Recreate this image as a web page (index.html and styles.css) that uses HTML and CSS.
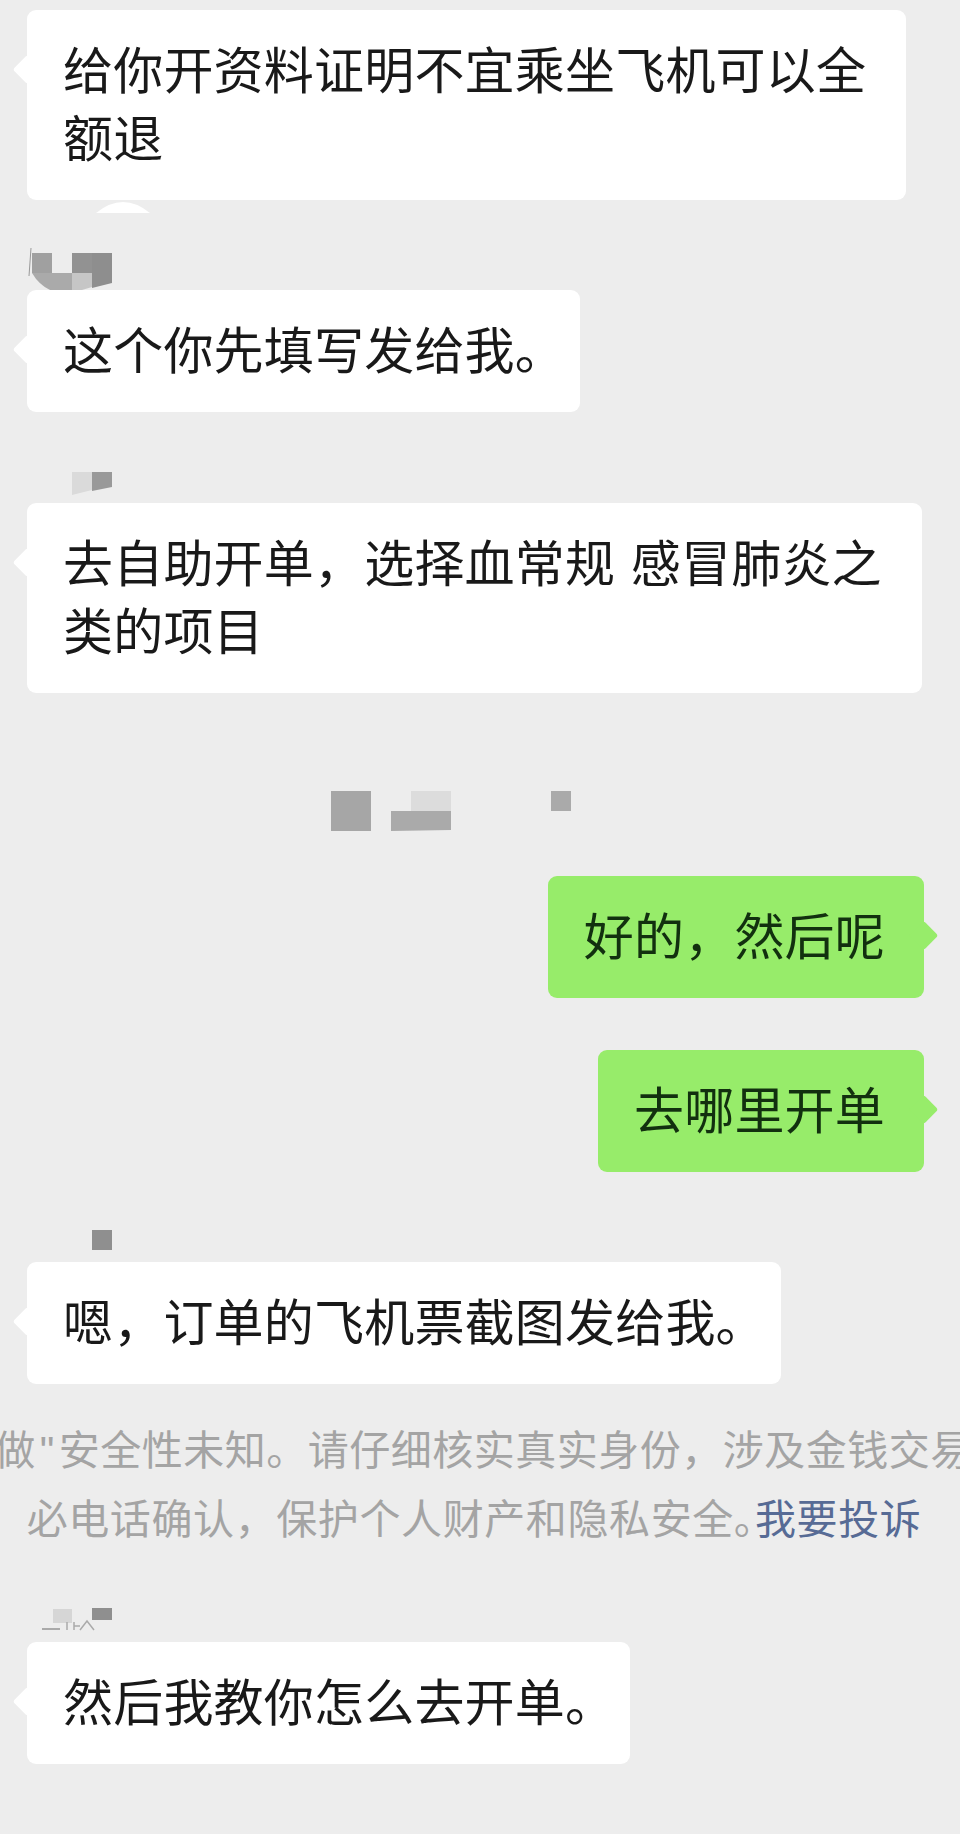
FILE: index.html
```html
<!DOCTYPE html>
<html lang="zh-CN">
<head>
	<meta charset="UTF-8">
	<title>聊天记录</title>
	<link rel="stylesheet" href="styles.css">
</head>
<body>
	<div id="chat">
		<div class="msg left"><div class="bubble">给你开资料证明不宜乘坐飞机可以全<br>额退</div></div>

		<svg class="mask" width="960" height="90">
			<path d="M96 13Q123 -9 150 13Z" fill="#fff"/>
			<path d="M31 48L29 76" stroke="#999" stroke-width="1" fill="none"/>
			<path d="M32 53H52V73H32Z" fill="#a0a0a0"/>
			<path d="M72 53H92V73H72Z" fill="#929292"/>
			<path d="M92 53H112V83L92 88Z" fill="#8e8e8e"/>
			<path d="M32 73H72V93H60Q42 90 32 73Z" fill="#aaa"/>
			<path d="M72 73H92V87L72 93Z" fill="#c6c6c6"/>
		</svg>
		<div class="msg left"><div class="bubble">这个你先填写发给我<span class="stop">。</span></div></div>

		<svg class="mask" width="960" height="91">
			<path d="M72 60H92V78L72 83Z" fill="#dadada"/>
			<path d="M92 60H112V75L92 79Z" fill="#999"/>
		</svg>
		<div class="msg left"><div class="bubble">去自助开单，选择血常规 感冒肺炎之<br>类的项目</div></div>

		<svg class="mask" width="960" height="183">
			<path d="M331 98H371V138H331Z" fill="#a6a6a6"/>
			<path d="M411 98H451V118H411Z" fill="#dcdcdc"/>
			<path d="M391 118H451V137L391 138Z" fill="#aaa"/>
			<path d="M551 98H571V118H551Z" fill="#aaa"/>
		</svg>
		<div class="msg right"><div class="bubble">好的，然后呢</div></div>

		<div class="gap"></div>
		<div class="msg right"><div class="bubble">去哪里开单</div></div>

		<svg class="mask" width="960" height="90">
			<path d="M92 58H112V78H92Z" fill="#8f8f8f"/>
		</svg>
		<div class="msg left"><div class="bubble">嗯，订单的飞机票截图发给我<span class="stop">。</span></div></div>

		<div class="notice">
			<p class="first">做<span class="quote">"</span>安全性未知。请仔细核实真实身份，涉及金钱交易</p>
			<p class="second">必电话确认，保护个人财产和隐私安全<span class="stop">。</span><a href="#">我要投诉</a></p>
		</div>

		<svg class="mask" width="960" height="87">
			<path d="M53 54H72V68H53Z" fill="#d6d6d6"/>
			<path d="M92 53H112V65H92Z" fill="#8f8f8f"/>
			<path d="M42 74H60" stroke="#aaa" stroke-width="2"/>
			<path d="M67 67V75M74 67V75M74 71H80M80 75L87 66L94 75" stroke="#aaa" stroke-width="1.5" fill="none"/>
		</svg>
		<div class="msg left"><div class="bubble">然后我教你怎么去开单<span class="stop">。</span></div></div>
	</div>
</body>
</html>
```

FILE: styles.css
```css
*{margin: 0;padding: 0;}
html,body{
	overflow: hidden;
}
body{
	background-color: #ededed;
	font-family: "Liberation Sans", "Noto Sans CJK SC", sans-serif;
}
#chat{
	width: 960px;
	height: 1834px;
	padding-top: 10px;
	box-sizing: border-box;
	overflow: hidden;
}
.msg{
	display: flex;
}
.msg.left{
	justify-content: flex-start;
	padding-left: 27px;
}
.msg.right{
	justify-content: flex-end;
	padding-right: 36px;
}
.bubble{
	position: relative;
	padding: 28px 40px 26px 36px;
	font-size: 50px;
	line-height: 68px;
	letter-spacing: 0.2px;
	word-spacing: 1.5px;
	white-space: nowrap;
	color: #191919;
	background-color: #fff;
	border-radius: 9px;
}
.bubble:before{
	position: absolute;
	top: 49px;
	width: 21px;
	height: 21px;
	content: "";
	background-color: inherit;
	border-radius: 3px;
	transform: rotate(45deg);
}
.left .bubble:before{
	left: -10px;
}
.right .bubble{
	padding-right: 39px;
	color: #12300f;
	background-color: #97ec6a;
}
.right .bubble:before{
	right: -10px;
}
/* half width full stop, as the phone font sets it */
.stop{
	font-feature-settings: "halt";
}
.mask{
	display: block;
}
.gap{
	height: 52px;
}
.notice{
	margin-top: 33px;
	font-size: 41px;
	line-height: 69px;
	letter-spacing: 0.5px;
	color: #a4a4a4;
}
.notice p{
	display: flex;
	justify-content: center;
	white-space: nowrap;
}
.notice .first{
	padding-left: 6px;
}
.notice .quote{
	margin: 0 4px;
}
.notice .second{
	padding-right: 12px;
	letter-spacing: 0.6px;
}
.notice a{
	color: #576b95;
	text-decoration: none;
}
```
